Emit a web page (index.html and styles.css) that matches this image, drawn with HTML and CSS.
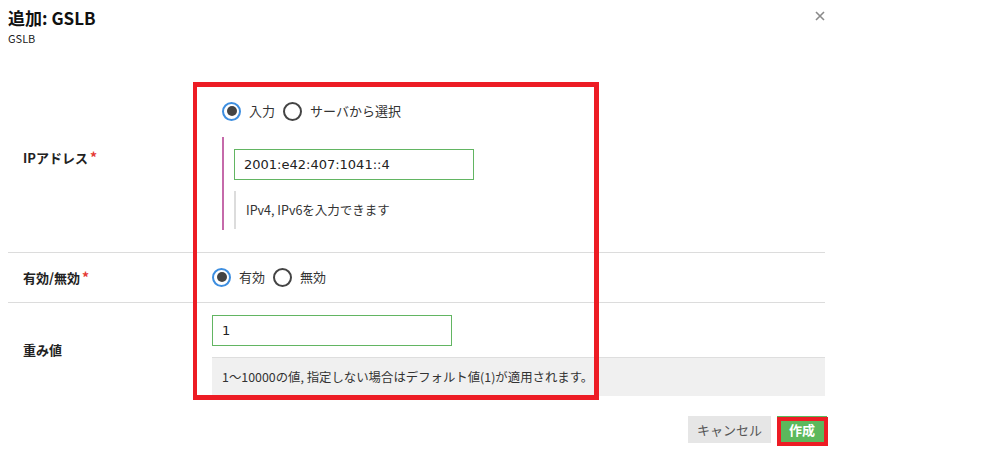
FILE: index.html
```html
<!DOCTYPE html>
<html lang="ja">
<head>
<meta charset="utf-8">
<title>追加: GSLB</title>
<link rel="stylesheet" href="styles.css">
</head>
<body>
<div class="dialog">
  <div class="header">
    <div class="titles">
      <h1 class="title">追加: GSLB</h1>
      <div class="subtitle">GSLB</div>
    </div>
    <button class="close" aria-label="閉じる">
      <svg width="10" height="10" viewBox="0 0 10 10"><path d="M1 1L9 9M9 1L1 9" stroke="#8a8a8a" stroke-width="1.6" fill="none"/></svg>
    </button>
  </div>

  <div class="form">
    <div class="row row-ip">
      <div class="label">IPアドレス<span class="req">*</span></div>
      <div class="field field-ip">
        <div class="radios">
          <label class="radio"><span class="dot checked"></span>入力</label>
          <label class="radio"><span class="dot"></span>サーバから選択</label>
        </div>
        <div class="sub">
          <div class="input input-ip">2001:e42:407:1041::4</div>
          <div class="hint">IPv4, IPv6を入力できます</div>
        </div>
      </div>
    </div>
    <div class="row row-enabled">
      <div class="label">有効/無効<span class="req">*</span></div>
      <div class="field field-enabled">
        <div class="radios">
          <label class="radio"><span class="dot checked"></span>有効</label>
          <label class="radio"><span class="dot"></span>無効</label>
        </div>
      </div>
    </div>
    <div class="row row-weight">
      <div class="label">重み値</div>
      <div class="field field-weight">
        <div class="input input-weight">1</div>
        <div class="helpbox">1～10000の値, 指定しない場合はデフォルト値(1)が適用されます。</div>
      </div>
    </div>
  </div>

  <div class="footer">
    <button class="btn btn-cancel">キャンセル</button>
    <button class="btn btn-create">作成</button>
  </div>

  <div class="mark mark-form"></div>
  <div class="mark mark-create"></div>
</div>
</body>
</html>
```

FILE: styles.css
```css
* { box-sizing: border-box; }
html, body { margin: 0; padding: 0; background: #fff; }
body {
  font-family: "Noto Sans CJK JP", "Noto Sans", sans-serif;
  font-size: 13px;
  color: #222;
}
.dialog {
  position: relative;
  width: 995px;
  height: 455px;
}
.header {
  display: flex;
  justify-content: space-between;
  width: 825px;
  padding: 6px 0 0 8px;
  height: 62px;
}
.title {
  margin: 0;
  font-size: 17px;
  line-height: 24px;
  font-weight: bold;
  color: #111;
}
.subtitle {
  font-size: 11px;
  line-height: 14px;
  margin-top: 1px;
  color: #222;
}
.close {
  border: 0;
  background: none;
  padding: 0;
  margin: 5px 0 0 0;
  width: 10px;
  height: 10px;
  display: flex;
}
.form {
  margin-left: 8px;
  width: 817px;
}
.row {
  display: grid;
  grid-template-columns: 204px 1fr;
  align-items: center;
  border-bottom: 1px solid #dcdcdc;
}
.row-weight { border-bottom: 0; }
.label {
  padding-left: 15px;
  font-weight: bold;
  font-size: 13px;
  line-height: 20px;
  color: #222;
}
.req { color: #e53935; margin-left: 2px; font-weight: bold; font-size: 14px; }
.field-ip { padding: 39px 0 22px 10px; }
.field-enabled { padding: 14px 0 15px 0; }
.field-weight { padding: 12px 0 0 0; }
.radios { display: flex; gap: 8px; height: 20px; align-items: center; }
.radio { display: flex; align-items: center; gap: 8px; color: #333; line-height: 20px; }
.dot {
  width: 19px; height: 19px;
  border: 2px solid #444;
  border-radius: 50%;
  display: inline-flex;
  align-items: center;
  justify-content: center;
}
.dot.checked { border: 2.5px solid #3d8ee0; }
.dot.checked::after {
  content: "";
  width: 10px; height: 10px;
  border-radius: 50%;
  background: #444;
}
.sub {
  margin-top: 16px;
  border-left: 2px solid #c56aaa;
  padding: 12px 0 1px 10px;
}
.input {
  width: 240px;
  height: 31px;
  border: 1px solid #62b562;
  padding: 0 9px;
  line-height: 29px;
  font-family: "DejaVu Sans", sans-serif;
  font-size: 13px;
  color: #222;
}
.hint {
  margin-top: 11px;
  border-left: 2px solid #dcdcdc;
  height: 38px;
  padding-left: 10px;
  line-height: 38px;
  font-size: 12.5px;
  color: #333;
}
.helpbox {
  margin-top: 11px;
  background: #f0f0f0;
  border-top: 1px solid #dedede;
  height: 39px;
  line-height: 38px;
  padding-left: 10px;
  font-size: 12.4px;
  color: #333;
}
.footer {
  display: flex;
  justify-content: flex-end;
  gap: 6px;
  width: 827px;
  margin-top: 20px;
}
.btn {
  border: 0;
  height: 27px;
  font-family: "Noto Sans CJK JP", sans-serif;
  font-size: 13px;
  padding: 0;
}
.btn-cancel { width: 83px; background: #e6e6e6; color: #555; }
.btn-create { width: 50px; background: #5cb85c; color: #fff; font-weight: bold; }
.mark { position: absolute; border: 4px solid #ed1c24; pointer-events: none; }
.mark-form { left: 193px; top: 82px; width: 406px; height: 318px; border-width: 5px 5px 5px 4px; }
.mark-create { left: 777px; top: 417px; width: 51px; height: 29px; }
```
